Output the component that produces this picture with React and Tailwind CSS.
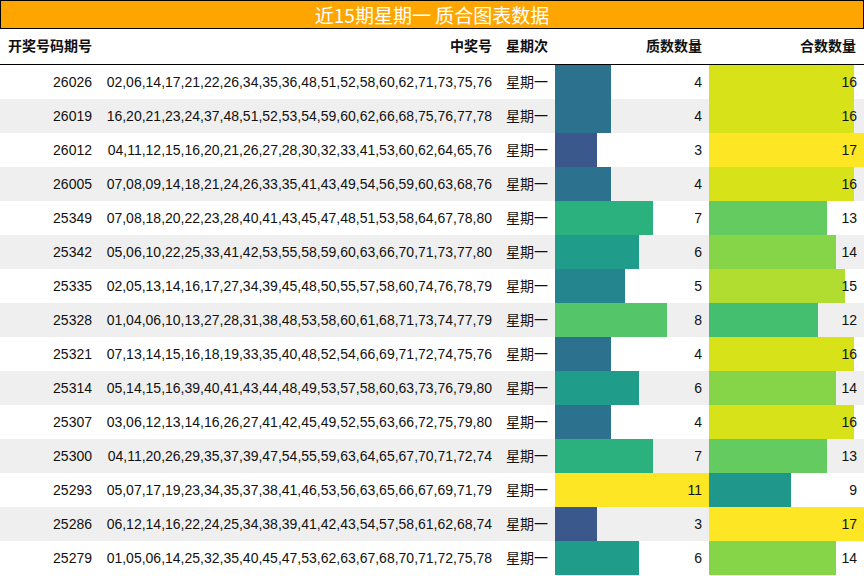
const rows = [
  ['26026', '02,06,14,17,21,22,26,34,35,36,48,51,52,58,60,62,71,73,75,76', 4, 16],
  ['26019', '16,20,21,23,24,37,48,51,52,53,54,59,60,62,66,68,75,76,77,78', 4, 16],
  ['26012', '04,11,12,15,16,20,21,26,27,28,30,32,33,41,53,60,62,64,65,76', 3, 17],
  ['26005', '07,08,09,14,18,21,24,26,33,35,41,43,49,54,56,59,60,63,68,76', 4, 16],
  ['25349', '07,08,18,20,22,23,28,40,41,43,45,47,48,51,53,58,64,67,78,80', 7, 13],
  ['25342', '05,06,10,22,25,33,41,42,53,55,58,59,60,63,66,70,71,73,77,80', 6, 14],
  ['25335', '02,05,13,14,16,17,27,34,39,45,48,50,55,57,58,60,74,76,78,79', 5, 15],
  ['25328', '01,04,06,10,13,27,28,31,38,48,53,58,60,61,68,71,73,74,77,79', 8, 12],
  ['25321', '07,13,14,15,16,18,19,33,35,40,48,52,54,66,69,71,72,74,75,76', 4, 16],
  ['25314', '05,14,15,16,39,40,41,43,44,48,49,53,57,58,60,63,73,76,79,80', 6, 14],
  ['25307', '03,06,12,13,14,16,26,27,41,42,45,49,52,55,63,66,72,75,79,80', 4, 16],
  ['25300', '04,11,20,26,29,35,37,39,47,54,55,59,63,64,65,67,70,71,72,74', 7, 13],
  ['25293', '05,07,17,19,23,34,35,37,38,41,46,53,56,63,65,66,67,69,71,79', 11, 9],
  ['25286', '06,12,14,16,22,24,25,34,38,39,41,42,43,54,57,58,61,62,68,74', 3, 17],
  ['25279', '01,05,06,14,25,32,35,40,45,47,53,62,63,67,68,70,71,72,75,78', 6, 14],
];

// viridis-ish colours picked off the chart
const primeColor = { 3: '#3a588b', 4: '#2c718e', 5: '#25858e', 6: '#1f9d8a', 7: '#2bb17e', 8: '#54c568', 11: '#fde725' };
const compColor = { 9: '#1f988b', 12: '#44bf70', 13: '#63cb5f', 14: '#86d549', 15: '#b0dd2f', 16: '#d8e219', 17: '#fde725' };

function BarCell({ value, max, width, color }) {
  return (
    <div className="relative h-full flex items-center justify-end pr-[7px]">
      <div
        className="absolute left-0 top-0 h-full"
        style={{ width: Math.floor((value / max) * width), background: color }}
      />
      <span className="relative">{value}</span>
    </div>
  );
}

export default function App() {
  return (
    <div
      className="w-[864px] h-[576px] bg-white text-[#111] overflow-hidden"
      style={{ fontFamily: '"Liberation Sans", "Noto Sans CJK SC", sans-serif' }}
    >
      {/* 标题 */}
      <div
        className="h-[29px] bg-[#ffa500] border border-black flex items-center justify-center text-white text-[19px] leading-none"
        style={{ fontFamily: '"Noto Sans CJK SC", sans-serif' }}
      >
        近15期星期一 质合图表数据
      </div>

      <div className="grid grid-cols-[98px_401px_56px_154px_155px] text-[14px]">
        {/* 表头 */}
        <div className="contents font-bold">
          <div className="h-[36px] border-b border-black flex items-center pl-[8px]">开奖号码期号</div>
          <div className="h-[36px] border-b border-black flex items-center justify-end pr-[7px]">中奖号</div>
          <div className="h-[36px] border-b border-black flex items-center pl-[7px]">星期次</div>
          <div className="h-[36px] border-b border-black flex items-center justify-end pr-[7px]">质数数量</div>
          <div className="h-[36px] border-b border-black flex items-center justify-end pr-[8px]">合数数量</div>
        </div>

        {rows.map(([issue, nums, prime, comp], i) => (
          <div key={issue} className={`contents ${i % 2 ? '[&>div]:bg-[#efefef]' : '[&>div]:bg-white'}`}>
            <div className="h-[34px] flex items-center justify-end pr-[6px]">{issue}</div>
            <div className="h-[34px] flex items-center justify-end pr-[7px] whitespace-nowrap">{nums}</div>
            <div className="h-[34px] flex items-center pl-[7px]">星期一</div>
            <div className="h-[34px]">
              <BarCell value={prime} max={11} width={154} color={primeColor[prime]} />
            </div>
            <div className="h-[34px]">
              <BarCell value={comp} max={17} width={155} color={compColor[comp]} />
            </div>
          </div>
        ))}
      </div>
    </div>
  );
}
